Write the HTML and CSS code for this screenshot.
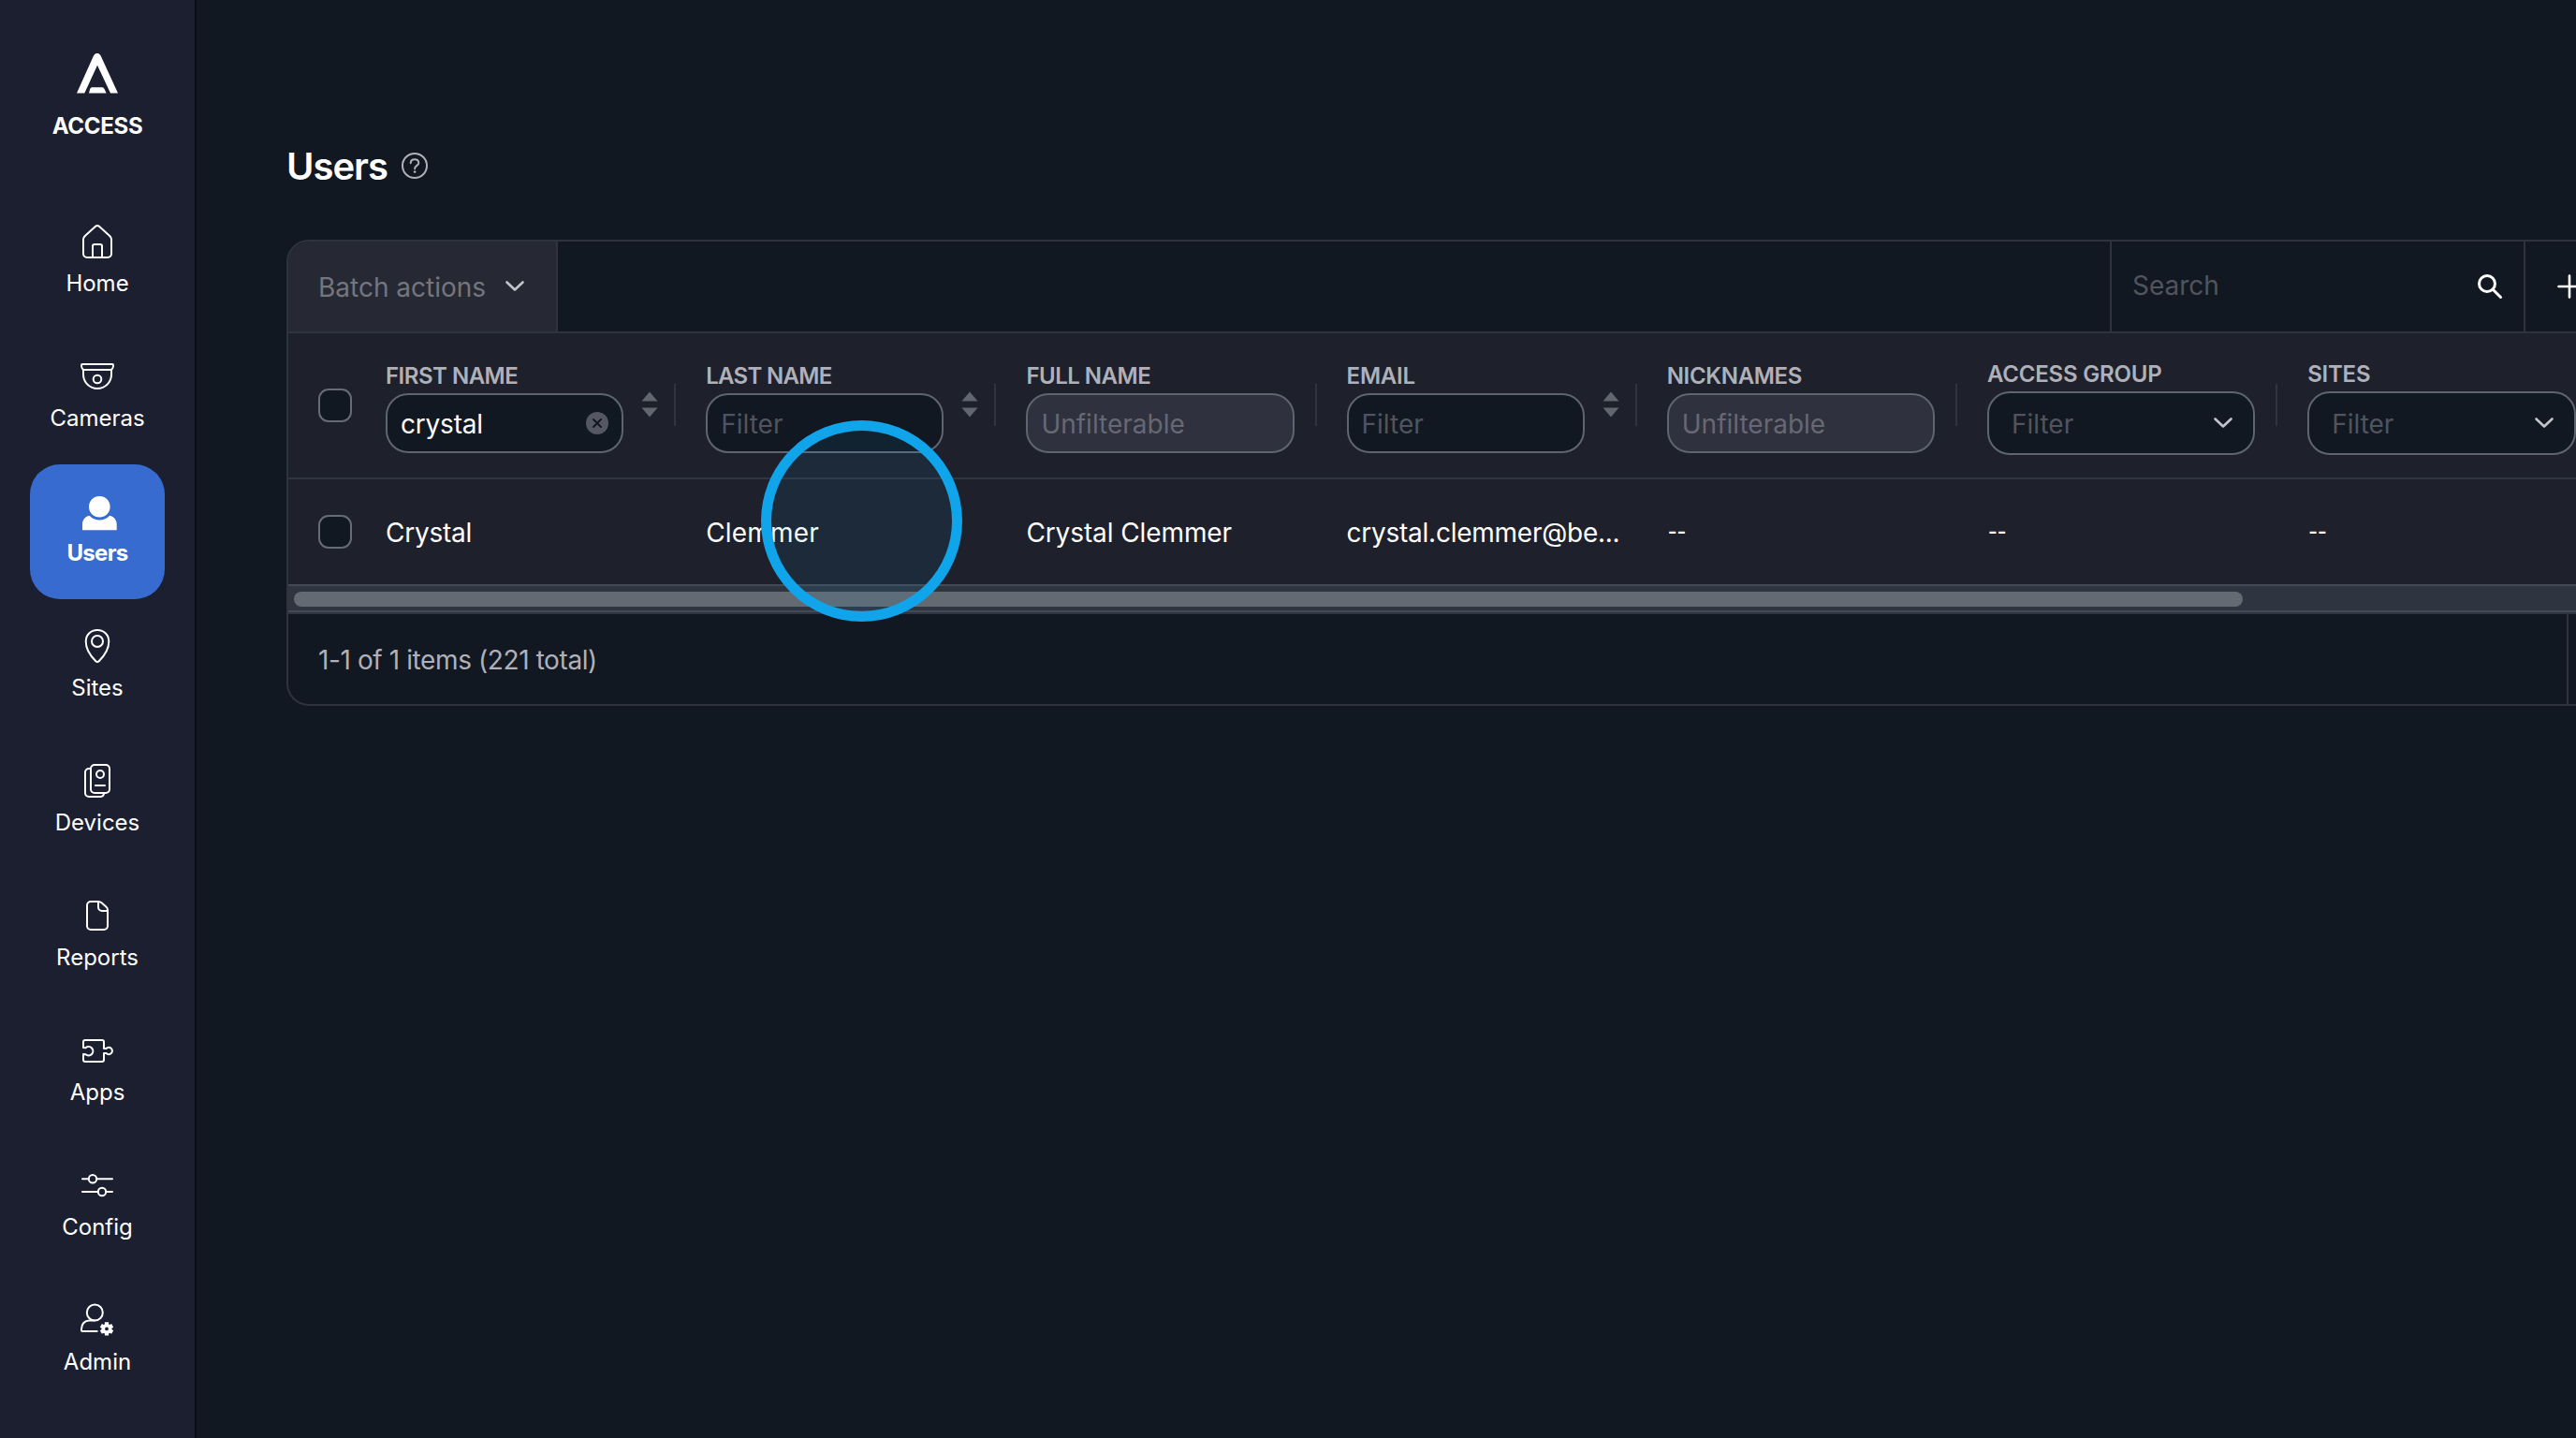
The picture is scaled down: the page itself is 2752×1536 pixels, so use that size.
FILE: index.html
```html
<!DOCTYPE html>
<html lang="en">
<head>
<meta charset="utf-8">
<title>Users</title>
<link rel="stylesheet" href="styles.css">
</head>
<body>
<div class="app">
  <aside class="sidebar">
    <div class="brand">
      <svg class="brand-mark" viewBox="0 0 44 43"><path d="M0 42.5 18 2.5Q19.2 0 21 0h1.6q1.8 0 3 2.5L44 42.5h-8L22 12.8 8.3 42.5z"/><path d="M13 42.5l1.2-4.5q.6-1.7 2-1.7h11q1.5 0 2.3 1.7l2.1 4.5z"/></svg>
      <span class="brand-name">ACCESS</span>
    </div>
    <nav class="nav">
      <a class="nav-item"><svg class="icon" viewBox="0 0 40 40"><path d="M5 17.5c0-1.5.6-2.5 1.8-3.6L17.8 4a3.3 3.3 0 0 1 4.4 0l11 9.9c1.2 1.1 1.8 2.1 1.8 3.6V33a4 4 0 0 1-4 4H9a4 4 0 0 1-4-4zM15 37V25a2 2 0 0 1 2-2h6a2 2 0 0 1 2 2v12"/></svg><span class="nav-label">Home</span></a>
      <a class="nav-item"><svg class="icon" viewBox="0 0 40 40"><path d="M3 8a1 1 0 0 1 1-1h32a1 1 0 0 1 1 1c0 3-1.5 5-3 5H6c-1.5 0-3-2-3-5zM5 13v5a15 15 0 0 0 30 0v-5"/><circle cx="20" cy="23" r="4.3"/></svg><span class="nav-label">Cameras</span></a>
      <a class="nav-item active"><svg class="icon solid" viewBox="0 0 40 40"><circle cx="22.3" cy="15.3" r="11.3"/><path d="M4 40.3V34c0-4.5 2.5-8 7.5-9.3a14.5 14.5 0 0 0 21.6 0c5 1.3 7.6 4.8 7.6 9.3v6.3z"/></svg><span class="nav-label">Users</span></a>
      <a class="nav-item"><svg class="icon" viewBox="0 0 40 40"><path d="M20 3C12.8 3 7.7 8.3 7.7 15.3c0 8.7 6.3 16.7 10.6 21a2.4 2.4 0 0 0 3.4 0c4.3-4.3 10.6-12.3 10.6-21C32.3 8.3 27.2 3 20 3z"/><circle cx="20" cy="15" r="6"/></svg><span class="nav-label">Sites</span></a>
      <a class="nav-item"><svg class="icon" viewBox="0 0 40 40"><rect x="13" y="3" width="20" height="30" rx="4"/><path d="M13 7h-2a4 4 0 0 0-4 4v22a4 4 0 0 0 4 4h12.5a4 4 0 0 0 3.5-4M18 25h10"/><circle cx="23" cy="13" r="4"/></svg><span class="nav-label">Devices</span></a>
      <a class="nav-item"><svg class="icon" viewBox="0 0 40 40"><path d="M9 9a4 4 0 0 1 4-4h8c1.5 0 2.5.5 3.5 1.3l4.8 4.2c1.1 1 1.7 2 1.7 3.5V31a4 4 0 0 1-4 4H13a4 4 0 0 1-4-4zM21 5v6a4 4 0 0 0 4 4h6"/></svg><span class="nav-label">Reports</span></a>
      <a class="nav-item"><svg class="icon" viewBox="0 0 40 40"><path d="M5 17v-6a2 2 0 0 1 2-2h18a2 2 0 0 1 2 2v7h2.5a3.7 3.7 0 1 1 0 5H27v7a2 2 0 0 1-2 2H7a2 2 0 0 1-2-2v-6l2.5.2a4.7 4.7 0 1 0 0-7z"/></svg><span class="nav-label">Apps</span></a>
      <a class="nav-item"><svg class="icon" viewBox="0 0 40 40"><path d="M4 13.2h6.5M19.5 13.2H36M4 27h16.5M29.5 27H36"/><circle cx="15" cy="13.2" r="4.2"/><circle cx="25" cy="27" r="4.2"/></svg><span class="nav-label">Config</span></a>
      <a class="nav-item"><svg class="icon" viewBox="0 0 40 40"><circle cx="17.3" cy="12" r="8.5"/><path d="M19.7 32H4a1 1 0 0 1-1-1v-1.500c0-5.300 3.500-9 8.500-9h5.500"/><circle class="gear" cx="30" cy="29.4" r="3.7"/><path class="teeth" d="M30 24.9v-2.600M30 33.9v2.600M33.9 27.150l2.250-1.300M26.1 27.150l-2.250-1.300M33.9 31.650l2.250 1.300M26.1 31.650l-2.250 1.300"/></svg><span class="nav-label">Admin</span></a>
    </nav>
  </aside>

  <main class="main">
    <header class="page-head">
      <h1 class="title">Users</h1>
      <svg class="help" viewBox="0 0 28 28"><circle cx="14" cy="14" r="13"/><path d="M9.7 11.2c0-2.5 1.8-4 4.3-4s4.3 1.5 4.3 3.7c0 3-4.2 3-4.2 6.3"/><circle class="dot" cx="14.1" cy="20.6" r="1.3"/></svg>
    </header>

    <section class="panel">
      <div class="toolbar">
        <div class="batch"><span class="batch-text">Batch actions</span><svg class="chevron" viewBox="0 0 20 12"><path d="M1.5 1.5 10 9.5l8.5-8"/></svg></div>
        <div class="search"><span class="search-text">Search</span><svg class="search-icon" viewBox="0 0 26 26"><circle cx="10" cy="10" r="8.5"/><path d="M16 16l8.5 8.5"/></svg></div>
        <div class="add"><svg class="plus" viewBox="0 0 24 24"><path d="M12 .5v23M.5 12h23"/></svg></div>
      </div>

      <div class="row head">
        <div class="check-cell"><span class="checkbox"></span></div>
        <div class="cell sortable"><div class="field"><span class="label first-name">FIRST NAME</span><div class="input"><span class="value">crystal</span><svg class="clear" viewBox="0 0 24 24"><circle cx="12" cy="12" r="12"/><path d="M8 8l8 8M16 8l-8 8"/></svg></div></div><svg class="sort" viewBox="0 0 18 28"><path d="M9 .5 17.5 10.5H.5zM9 27.5.5 17.5h17z"/></svg></div>
        <div class="cell sortable"><div class="field"><span class="label last-name">LAST NAME</span><div class="input"><span class="hint">Filter</span></div></div><svg class="sort" viewBox="0 0 18 28"><path d="M9 .5 17.5 10.5H.5zM9 27.5.5 17.5h17z"/></svg></div>
        <div class="cell"><div class="field"><span class="label full-name">FULL NAME</span><div class="input disabled"><span class="hint">Unfilterable</span></div></div></div>
        <div class="cell sortable"><div class="field"><span class="label">EMAIL</span><div class="input"><span class="hint">Filter</span></div></div><svg class="sort" viewBox="0 0 18 28"><path d="M9 .5 17.5 10.5H.5zM9 27.5.5 17.5h17z"/></svg></div>
        <div class="cell"><div class="field"><span class="label nicknames">NICKNAMES</span><div class="input disabled"><span class="hint">Unfilterable</span></div></div></div>
        <div class="cell tall"><div class="field"><span class="label">ACCESS GROUP</span><div class="input select"><span class="hint">Filter</span><svg class="chevron" viewBox="0 0 20 12"><path d="M1.5 1.5 10 9.5l8.5-8"/></svg></div></div></div>
        <div class="cell tall"><div class="field"><span class="label">SITES</span><div class="input select"><span class="hint">Filter</span><svg class="chevron" viewBox="0 0 20 12"><path d="M1.5 1.5 10 9.5l8.5-8"/></svg></div></div></div>
      </div>

      <div class="row body">
        <div class="check-cell"><span class="checkbox"></span></div>
        <div class="cell"><span class="text">Crystal</span></div>
        <div class="cell"><span class="text last">Clemmer</span></div>
        <div class="cell"><span class="text full">Crystal Clemmer</span></div>
        <div class="cell"><span class="text">crystal.clemmer@be...</span></div>
        <div class="cell"><span class="text empty">--</span></div>
        <div class="cell"><span class="text empty">--</span></div>
        <div class="cell"><span class="text empty">--</span></div>
      </div>

      <div class="scrollbar"><div class="thumb"></div></div>

      <footer class="foot"><span class="count">1-1 of 1 items (221 total)</span><div class="pager"></div></footer>
    </section>
  </main>
  <div class="pointer"></div>
</div>
</body>
</html>
```
FILE: styles.css
```css
* { box-sizing: border-box; }

body {
  margin: 0;
  background: #121822;
  color: #fff;
  font-family: Inter, "Liberation Sans", sans-serif;
  overflow: hidden;
}

svg { display: block; flex: none; overflow: visible; fill: none; stroke: #fff; stroke-width: 2; stroke-linecap: round; stroke-linejoin: round; }

.app { display: flex; position: relative; width: 2752px; height: 1536px; overflow: hidden; }

/* Sidebar */
.sidebar { flex: none; width: 210px; background: #1b1f30; border-right: 2px solid #090d17; }
.brand { height: 208px; padding-top: 57px; display: flex; flex-direction: column; align-items: center; }
.brand-mark { width: 44px; height: 43px; fill: #fff; stroke: none; }
.brand-name { margin-top: 20px; font-size: 24px; line-height: 29px; font-weight: 700; letter-spacing: -.3px; }
.nav { display: flex; flex-direction: column; align-items: center; }
.nav-item { width: 144px; height: 144px; padding-top: 30px; border-radius: 32px; display: flex; flex-direction: column; align-items: center; gap: 10px; }
.nav-item.active { background: #386bd0; font-weight: 700; letter-spacing: -.7px; }
.nav-label { font-size: 24px; line-height: 29px; }
.icon { width: 40px; height: 40px; }
.icon.solid { fill: #fff; stroke: none; }
.gear { stroke-width: 3.6; }
.teeth { stroke-width: 4.2; stroke-linecap: butt; }

/* Page */
.main { flex: none; width: 2860px; padding: 152px 0 0 96px; }
.page-head { display: flex; align-items: center; gap: 15px; height: 50px; margin-bottom: 54px; }
.title { margin: 0; padding-top: 1px; font-size: 40px; line-height: 49px; font-weight: 600; letter-spacing: -1px; }
.help { width: 28px; height: 28px; stroke: #b0b1b8; }
.help .dot { fill: #b0b1b8; stroke: none; }

.panel { border: 2px solid #2e333d; border-radius: 24px; overflow: hidden; }

.toolbar { display: flex; height: 98px; border-bottom: 2px solid #2e333d; }
.batch { width: 288px; padding: 0 34px 0 32px; display: flex; align-items: center; justify-content: space-between; background: #262933; border-right: 2px solid #2e333d; color: #74757d; font-size: 28px; line-height: 36px; }
.batch-text { padding-top: 2px; }
.chevron { width: 20px; height: 12px; stroke: #c3c4ca; stroke-width: 2.6; }
.search { width: 444px; margin-left: auto; padding: 0 23px 0 22px; display: flex; align-items: center; justify-content: space-between; border-left: 2px solid #2e333d; border-right: 2px solid #2e333d; color: #50545e; font-size: 28px; line-height: 36px; }
.search-text { padding-bottom: 2px; }
.search-icon { width: 26px; height: 26px; stroke-width: 3; }
.add { width: 370px; padding-left: 35px; display: flex; align-items: center; }
.plus { width: 24px; height: 24px; stroke-width: 2.6; }

/* Table */
.row { display: grid; grid-template-columns: 104px repeat(7, 342.2px); background: #1e212c; }
.head { height: 156px; border-bottom: 2px solid #31353f; }
.body { height: 112px; align-items: center; }
.check-cell { padding-left: 32px; }
.checkbox { display: block; width: 36px; height: 36px; border: 2px solid #666b76; border-radius: 11px; background: #121822; }
.head .check-cell { padding-top: 59px; }
.head .cell { display: flex; padding-top: 32px; }
.head .cell.tall { padding-top: 30px; }
.head .cell::after { content: ""; width: 2px; height: 45px; margin: 22px 32px 0 auto; background: #30343f; }
.head .cell.tall::after { margin-top: 24px; }
.field { width: 286.4px; }
.sortable .field { width: 254px; }
.label { display: block; height: 32px; line-height: 27px; font-size: 24px; font-weight: 600; letter-spacing: -.2px; color: #b0b1b8; white-space: nowrap; }
.first-name { letter-spacing: -.5px; }
.last-name { letter-spacing: -.7px; }
.full-name { letter-spacing: -.5px; }
.nicknames { letter-spacing: -.35px; }
.input { display: flex; align-items: center; justify-content: space-between; height: 64px; padding: 0 14px; border: 2px solid #5f6570; border-radius: 24px; background: #121822; font-size: 28px; line-height: 36px; }
.input.disabled { background: #30313e; }
.input.select { height: 68px; padding: 0 22px 0 24px; }
.select .chevron { margin-bottom: 1px; }
.value, .hint { padding-top: 2px; }
.value { letter-spacing: -.2px; }
.hint { color: #50545e; }
.disabled .hint { color: #666873; }
.clear { width: 24px; height: 24px; fill: #555862; stroke: none; }
.clear path { stroke: #121822; stroke-width: 2; }
.sort { width: 18px; height: 28px; margin: 30px 0 0 19px; fill: #62666f; stroke: none; }
.text { display: block; padding-top: 2px; font-size: 28px; line-height: 36px; letter-spacing: -.25px; white-space: nowrap; }
.text.last { letter-spacing: .2px; }
.text.full { letter-spacing: -.1px; }
.text.empty { padding: 0 0 0 1px; font-size: 21px; font-weight: 600; letter-spacing: 0; }

/* Horizontal scrollbar */
.scrollbar { height: 30px; padding: 6px; background: #2f3540; border: solid #444a55; border-width: 2px 0; }
.thumb { width: 2082px; height: 16px; border-radius: 8px; background: #646a72; }

.foot { display: flex; justify-content: space-between; align-items: center; height: 98px; padding-left: 32px; border-top: 2px solid #2f3540; color: #b0b1b8; font-size: 28px; line-height: 36px; }
.count { padding-top: 2px; letter-spacing: -.4px; }
.pager { width: 326px; height: 96px; border-left: 2px solid #2e333d; }

/* Click highlight above the table */
.pointer { position: absolute; left: 813px; top: 449px; width: 215px; height: 215px; border: 11px solid #10a5ea; border-radius: 50%; background: rgba(16, 165, 234, .07); }
```
